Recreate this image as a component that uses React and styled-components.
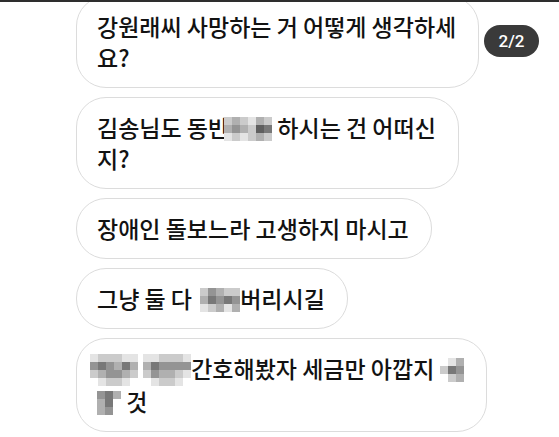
import React from "react"
import styled, { createGlobalStyle } from "styled-components"

const GlobalStyle = createGlobalStyle`
  html, body {
    margin: 0;
    padding: 0;
    background: #fff;
  }
  body {
    font-family: "Noto Sans CJK KR", "Noto Sans", sans-serif;
  }
`

const Page = styled.div`
  position: relative;
  width: 100%;
  height: 100vh;
  overflow: hidden;
  background: #fff;
`

const TopRule = styled.div`
  position: relative;
  z-index: 2;
  height: 2px;
  background: #2e2e2e;
`

const Thread = styled.div`
  display: flex;
  flex-direction: column;
  align-items: flex-start;
  gap: 9px;
  margin-top: -6px;
  padding-left: 76px;
`

const Bubble = styled.div`
  border: 1px solid #dcdcdc;
  border-radius: 30px;
  padding: 14px 22px 14px 20px;
  font-size: 23px;
  font-weight: 500;
  line-height: 31px;
  color: #121212;
  white-space: nowrap;
  background: #fff;
`

const Counter = styled.div`
  position: absolute;
  top: 25px;
  right: 20px;
  width: 55px;
  height: 32px;
  border-radius: 16px;
  background: #3a3a3a;
  color: #fff;
  font-family: Roboto, "Noto Sans", sans-serif;
  font-size: 17px;
  font-weight: 500;
  display: flex;
  align-items: center;
  justify-content: center;
`

const MosaicSvg = styled.svg`
  display: inline-block;
  vertical-align: middle;
  margin-left: ${props => props.$shift || 0}px;
  margin-top: -4px;
`

const shades = ["transparent", "#e4e4e4", "#cbcbcb", "#b0b0b0", "#949494", "#787878", "#5f5f5f"]

// pixelated (blurred-out) word
const Mosaic = ({ rows, cell = 8, shift }) => {
  const cols = rows[0].length
  return (
    <MosaicSvg width={cols * cell} height={rows.length * cell} $shift={shift}>
      {rows.map((row, y) =>
        row.split("").map((c, x) => (
          <rect key={`${x}-${y}`} x={x * cell} y={y * cell} width={cell} height={cell} fill={shades[+c]} />
        ))
      )}
    </MosaicSvg>
  )
}

const App = () => (
  <Page>
    <GlobalStyle />
    <TopRule />
    <Thread>
      <Bubble>
        강원래씨 사망하는 거 어떻게 생각하세
        <br />
        요?
      </Bubble>
      <Bubble>
        김송님도 동반
        <Mosaic rows={["232132", "343265", "121232"]} shift={-5} />
        {" "}하시는 건 어떠신
        <br />
        지?
      </Bubble>
      <Bubble>장애인 돌보느라 고생하지 마시고</Bubble>
      <Bubble>
        그냥 둘 다{" "}
        <Mosaic rows={["24322", "35454", "12313"]} shift={3} />
        버리시길
      </Bubble>
      <Bubble>
        <Mosaic rows={["122211", "454353", "234432", "012210"]} shift={-7} />
        {" "}
        <Mosaic rows={["112221", "354444", "243321", "012210"]} />
        간호해봤자 세금만 아깝지{" "}
        <Mosaic rows={["013", "254", "023"]} />
        <br />
        <Mosaic rows={["453", "350", "340"]} />
        {" "}것
      </Bubble>
    </Thread>
    <Counter>2/2</Counter>
  </Page>
)

export default App
